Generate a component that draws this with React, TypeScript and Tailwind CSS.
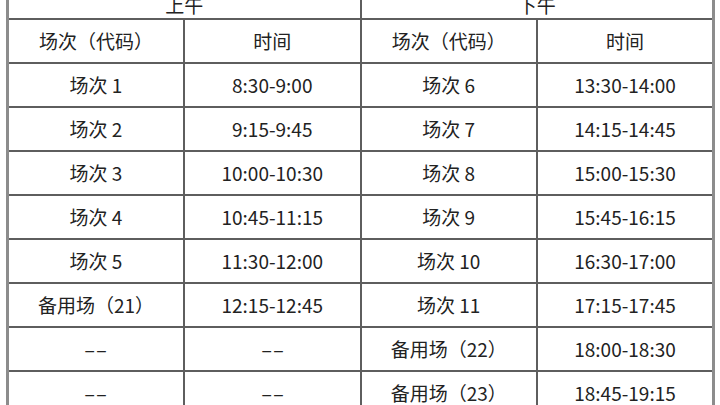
const rows: [string, string, string, string][] = [
  ["场次 1", "8:30-9:00", "场次 6", "13:30-14:00"],
  ["场次 2", "9:15-9:45", "场次 7", "14:15-14:45"],
  ["场次 3", "10:00-10:30", "场次 8", "15:00-15:30"],
  ["场次 4", "10:45-11:15", "场次 9", "15:45-16:15"],
  ["场次 5", "11:30-12:00", "场次 10", "16:30-17:00"],
  ["备用场（21）", "12:15-12:45", "场次 11", "17:15-17:45"],
  ["--", "--", "备用场（22）", "18:00-18:30"],
  ["--", "--", "备用场（23）", "18:45-19:15"],
];

const base = "border-2 border-[#5e5e5e] text-center p-0";
const cell = base + " align-middle h-[44px]";
const top = base + " align-bottom h-[32px] leading-[20px] pb-[3px]";

function Val({ v }: { v: string }) {
  if (v === "--") return <span className="inline-block scale-x-[1.8]">--</span>;
  return <>{v}</>;
}

export default function App() {
  return (
    <div
      className="w-[720px] h-[405px] overflow-hidden bg-white text-[#222] text-[19px]"
      style={{ fontFamily: '"Noto Sans CJK SC", "Noto Sans", sans-serif' }}
    >
      <table className="ml-[6px] mt-[-14px] w-[709px] border-collapse table-fixed border-x-[3px] border-[#8c8c8c]">
        <tbody>
          <tr>
            <td colSpan={2} className={top}>上午</td>
            <td colSpan={2} className={top}>下午</td>
          </tr>
          <tr>
            <td className={cell}>场次（代码）</td>
            <td className={cell}>时间</td>
            <td className={cell}>场次（代码）</td>
            <td className={cell}>时间</td>
          </tr>
          {rows.map((r, i) => (
            <tr key={i}>
              <td className={cell}><Val v={r[0]} /></td>
              <td className={cell}><Val v={r[1]} /></td>
              <td className={cell}><Val v={r[2]} /></td>
              <td className={cell}><Val v={r[3]} /></td>
            </tr>
          ))}
        </tbody>
      </table>
    </div>
  );
}
